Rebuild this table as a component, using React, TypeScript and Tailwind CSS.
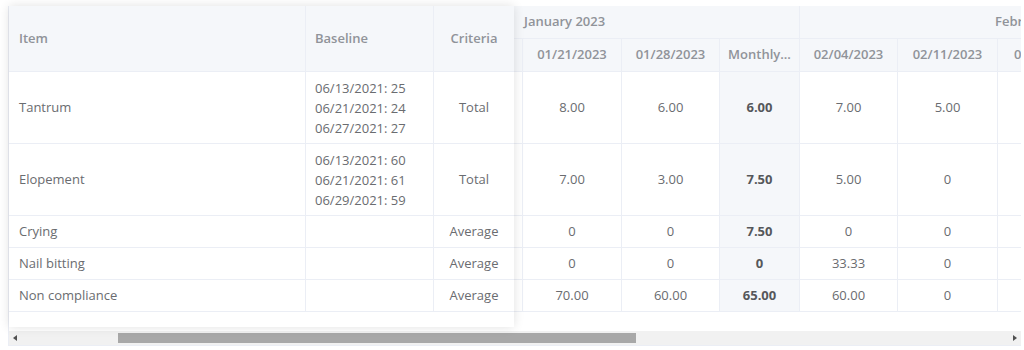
import React from "react";

const font = { fontFamily: '"Open Sans", "Noto Sans", sans-serif' };

type Row = { item: string; baseline: string[]; criteria: string; vals: string[]; h: string };

const rows: Row[] = [
  { item: "Tantrum", baseline: ["06/13/2021: 25", "06/21/2021: 24", "06/27/2021: 27"], criteria: "Total", vals: ["8.00", "6.00", "6.00", "7.00", "5.00"], h: "h-[72px]" },
  { item: "Elopement", baseline: ["06/13/2021: 60", "06/21/2021: 61", "06/29/2021: 59"], criteria: "Total", vals: ["7.00", "3.00", "7.50", "5.00", "0"], h: "h-[72px]" },
  { item: "Crying", baseline: [], criteria: "Average", vals: ["0", "0", "7.50", "0", "0"], h: "h-[32px]" },
  { item: "Nail bitting", baseline: [], criteria: "Average", vals: ["0", "0", "0", "33.33", "0"], h: "h-[32px]" },
  { item: "Non compliance", baseline: [], criteria: "Average", vals: ["70.00", "60.00", "65.00", "60.00", "0"], h: "h-[32px]" },
];

const scrollCols = "grid grid-cols-[9px_99px_98px_80px_98px_100px_23px]";
const fixedCols = "grid grid-cols-[297px_128px_80px]";
const bd = "border-[#ebeef5]";

export default function App() {
  return (
    <div className="w-[1024px] h-[350px] bg-white pt-[6px] pl-[8px] text-[13px]" style={font}>
      <div className={`w-[1013px] border-l ${bd}`}>
        <div className="flex h-[321px]">
          {/* fixed columns */}
          <div className="relative z-10 w-[505px] h-full bg-white shadow-[0_0_10px_rgba(0,0,0,0.12)]">
            <div className={`${fixedCols} h-[66px] bg-[#f5f7fa] text-[#909399] font-semibold`}>
              <div className={`flex items-center pl-[10px] border-r border-b ${bd}`}>Item</div>
              <div className={`flex items-center pl-[9px] border-r border-b ${bd}`}>Baseline</div>
              <div className={`flex items-center justify-center border-b ${bd}`}>Criteria</div>
            </div>
            {rows.map((r) => (
              <div key={r.item} className={`${fixedCols} ${r.h} text-[#6a6c70]`}>
                <div className={`flex items-center pl-[10px] border-r border-b ${bd}`}>{r.item}</div>
                <div className={`flex flex-col justify-center pl-[9px] leading-[20px] border-r border-b ${bd}`}>
                  {r.baseline.map((b) => (
                    <span key={b}>{b}</span>
                  ))}
                </div>
                <div className={`flex items-center justify-center border-b ${bd}`}>{r.criteria}</div>
              </div>
            ))}
          </div>
          {/* scrolling columns */}
          <div className="flex-1 overflow-hidden">
            <div className={`${scrollCols} bg-[#f5f7fa] text-[#909399] font-semibold`}>
              <div className={`col-span-4 h-[33px] flex items-center pl-[10px] border-r border-b ${bd}`}>January 2023</div>
              <div className={`col-span-3 h-[33px] flex items-center pl-[195px] border-b whitespace-nowrap ${bd}`}>February 2023</div>
              <div className={`h-[33px] border-r border-b ${bd}`}></div>
              {["01/21/2023", "01/28/2023", "Monthly...", "02/04/2023", "02/11/2023"].map((h) => (
                <div key={h} className={`h-[33px] flex items-center justify-center border-r border-b ${bd}`}>{h}</div>
              ))}
              <div className={`h-[33px] flex items-center pl-[16px] border-b whitespace-nowrap ${bd}`}>02/18/2023</div>
            </div>
            {rows.map((r) => (
              <div key={r.item} className={`${scrollCols} ${r.h} text-[#6a6c70]`}>
                <div className={`border-r border-b ${bd}`}></div>
                {r.vals.map((v, i) => (
                  <div
                    key={i}
                    className={`flex items-center justify-center border-r border-b ${bd} ${i === 2 ? "bg-[#f5f7fa] font-bold text-[#55575b]" : ""}`}
                  >
                    {v}
                  </div>
                ))}
                <div className={`border-b ${bd}`}></div>
              </div>
            ))}
          </div>
        </div>
        {/* scrollbar */}
        <div className="mt-[4px] h-[14px] bg-[#f1f1f1] flex items-center relative">
          <div className="w-[12px] flex items-center justify-center">
            <div className="w-0 h-0 border-y-[3px] border-y-transparent border-r-[4px] border-r-[#505050]"></div>
          </div>
          <div className="ml-[97px] w-[518px] h-[10px] bg-[#a8a8a8]"></div>
          <div className="flex-1"></div>
          <div className="w-[12px] flex items-center justify-center">
            <div className="w-0 h-0 border-y-[3px] border-y-transparent border-l-[4px] border-l-[#505050]"></div>
          </div>
        </div>
        <div className="h-px bg-[#ebeef5]"></div>
      </div>
    </div>
  );
}
